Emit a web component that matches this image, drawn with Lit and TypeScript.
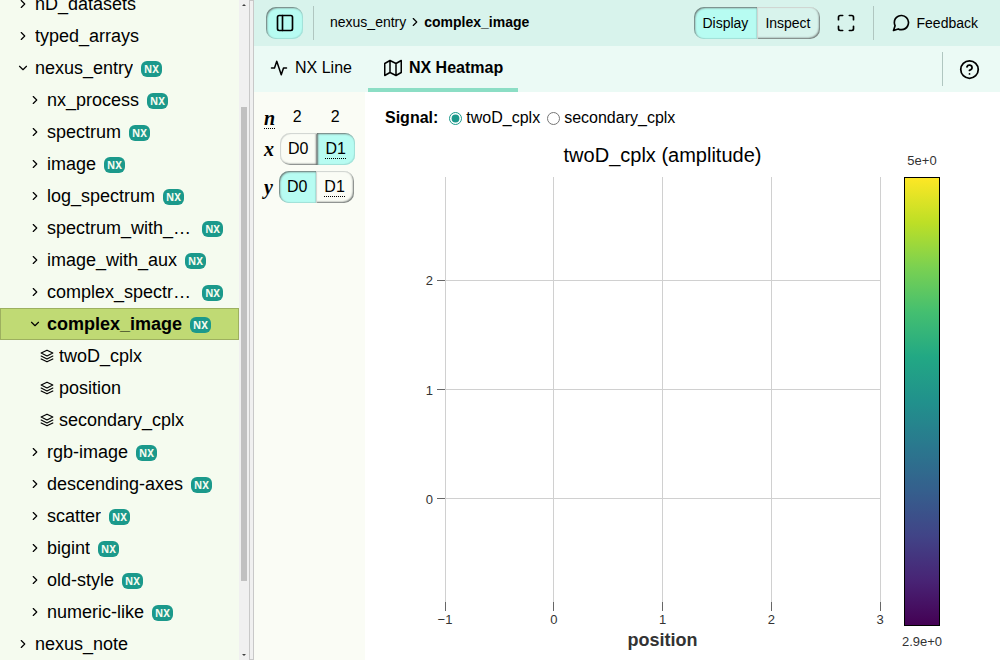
import { LitElement, html, svg, css, nothing } from "lit";
import { customElement, property, state } from "lit/decorators.js";
import { classMap } from "lit/directives/class-map.js";

const ICONS = {
  right: svg`<path d="m9 18 6-6-6-6" />`,
  down: svg`<path d="m6 9 6 6 6-6" />`,
  layers: svg`<path d="M12 2 2 7l10 5 10-5z" /><path d="m2 12 10 5 10-5" /><path d="m2 17 10 5 10-5" />`,
  sidebar: svg`<rect x="3" y="3" width="18" height="18" rx="2" /><path d="M9 3v18" />`,
  maximize: svg`<path d="M8 3H5a2 2 0 0 0-2 2v3m18 0V5a2 2 0 0 0-2-2h-3m0 18h3a2 2 0 0 0 2-2v-3M3 16v3a2 2 0 0 0 2 2h3" />`,
  message: svg`<path d="M21 11.5a8.38 8.38 0 0 1-.9 3.8 8.5 8.5 0 0 1-7.6 4.7 8.38 8.38 0 0 1-3.8-.9L3 21l1.9-5.7a8.38 8.38 0 0 1-.9-3.8 8.5 8.5 0 0 1 4.7-7.6 8.38 8.38 0 0 1 3.8-.9h.5a8.48 8.48 0 0 1 8 8v.5z" />`,
  activity: svg`<path d="M22 12h-4l-3 9L9 3l-3 9H2" />`,
  map: svg`<path d="M1 6v16l7-4 8 4 7-4V2l-7 4-8-4-7 4zM8 2v16M16 6v16" />`,
  help: svg`<circle cx="12" cy="12" r="10" /><path d="M9.09 9a3 3 0 0 1 5.83 1c0 2-3 3-3 3M12 17h.01" />`,
};

type IconName = keyof typeof ICONS;

const icon = (name: IconName, size: number) => html`<svg
  class="icon"
  width=${size}
  height=${size}
  viewBox="0 0 24 24"
  aria-hidden="true"
>
  ${ICONS[name]}
</svg>`;

const shared = css`
  :host,
  * {
    box-sizing: border-box;
  }
  button {
    font: inherit;
    color: inherit;
    background: none;
    border: 0;
    padding: 0;
    margin: 0;
    cursor: pointer;
  }
  .icon {
    display: block;
    flex: none;
    fill: none;
    stroke: currentColor;
    stroke-width: 2;
    stroke-linecap: round;
    stroke-linejoin: round;
  }
`;

interface Entity {
  name: string;
  level: number;
  kind: "group" | "open" | "dataset";
  nx?: boolean;
}

const group = (name: string, level = 1, nx = true): Entity => ({ name, level, kind: "group", nx });
const dataset = (name: string): Entity => ({ name, level: 2, kind: "dataset" });

const ENTITIES: Entity[] = [
  group("nD_datasets", 0, false),
  group("typed_arrays", 0, false),
  { name: "nexus_entry", level: 0, kind: "open", nx: true },
  group("nx_process"),
  group("spectrum"),
  group("image"),
  group("log_spectrum"),
  group("spectrum_with_aux"),
  group("image_with_aux"),
  group("complex_spectrum"),
  { name: "complex_image", level: 1, kind: "open", nx: true },
  dataset("twoD_cplx"),
  dataset("position"),
  dataset("secondary_cplx"),
  group("rgb-image"),
  group("descending-axes"),
  group("scatter"),
  group("bigint"),
  group("old-style"),
  group("numeric-like"),
  group("nexus_note", 0, false),
];

@customElement("file-explorer")
export class FileExplorer extends LitElement {
  @state() private selected = "complex_image";

  static styles = [
    shared,
    css`
      :host {
        display: grid;
        grid-template-columns: 1fr 10px;
        height: 100%;
        overflow: hidden;
        background: #f5fbef;
        font-size: 18px;
      }
      .tree {
        display: flex;
        flex-direction: column;
        justify-content: flex-end;
        min-width: 0;
        height: 100%;
        overflow: hidden;
      }
      .row {
        display: flex;
        flex: none;
        align-items: center;
        height: 32px;
        padding-right: 15px;
        border: 1px solid transparent;
        text-align: left;
      }
      .level0 {
        padding-left: 15px;
      }
      .level1 {
        padding-left: 27px;
      }
      .level2 {
        padding-left: 39px;
      }
      .selected {
        background: #c0da74;
        border-color: #9db05f;
        font-weight: bold;
      }
      .name {
        min-width: 0;
        margin-left: 5px;
        overflow: hidden;
        text-overflow: ellipsis;
        white-space: nowrap;
      }
      .badge {
        flex: none;
        margin: 1px 0 0 8px;
        padding: 0 3px;
        border-radius: 6px;
        background: #1b998b;
        color: #f5fbef;
        font: bold 10px/16px "Noto Sans", sans-serif;
      }
      .scrollbar {
        display: flex;
        flex-direction: column;
        align-items: center;
        padding: 4px 0;
        background: #f0f0f0;
      }
      .arrow {
        border: 2px solid transparent;
        border-top-width: 0;
        border-bottom-color: #404040;
      }
      .arrow.end {
        border-top: 2px solid #404040;
        border-bottom-width: 0;
      }
      .track {
        display: grid;
        grid-template-rows: 101fr 474fr 73fr;
        flex: 1;
      }
      .thumb {
        grid-row: 2;
        width: 6px;
        background: #c1c1c1;
      }
    `,
  ];

  render() {
    return html`
      <div class="tree" role="tree" aria-label="Explorer">
        ${ENTITIES.map(
          (e) => html`<button
            type="button"
            role="treeitem"
            class=${classMap({
              row: true,
              [`level${e.level}`]: true,
              selected: e.name === this.selected,
            })}
            aria-selected=${e.name === this.selected}
            @click=${() => (this.selected = e.name)}
          >
            ${icon(e.kind === "dataset" ? "layers" : e.kind === "open" ? "down" : "right", 14)}
            <span class="name">${e.name}</span>
            ${e.nx ? html`<span class="badge">NX</span>` : nothing}
          </button>`
        )}
      </div>
      <div class="scrollbar" aria-hidden="true">
        <span class="arrow"></span>
        <div class="track"><span class="thumb"></span></div>
        <span class="arrow end"></span>
      </div>
    `;
  }
}

@customElement("toggle-group")
export class ToggleGroup extends LitElement {
  @property({ attribute: false }) options: string[] = [];
  @property() value = "";
  @property() hinted = "";
  @property() label = "";

  static styles = [
    shared,
    css`
      :host {
        display: block;
      }
      .group {
        display: flex;
        height: 32px;
      }
      .option {
        padding: 0 9px 0 8px;
        box-shadow: inset 1px 1px 1px #d0d4d0, inset -1px -1px 2px #6a706e;
      }
      .option:first-child {
        border-radius: 10px 0 0 10px;
      }
      .option:last-child {
        border-radius: 0 10px 10px 0;
      }
      .pressed {
        background: #b7fcf2;
        box-shadow: inset 1px 1px 2px #6a706e, inset -1px -1px 1px #a5e6dd;
      }
      .hint {
        display: inline-block;
        border-bottom: 1px dotted #000;
        line-height: 18px;
      }
    `,
  ];

  render() {
    return html`<div class="group" role="radiogroup" aria-label=${this.label}>
      ${this.options.map(
        (o) => html`<button
          type="button"
          role="radio"
          class=${classMap({ option: true, pressed: o === this.value })}
          aria-checked=${o === this.value}
          @click=${() => (this.value = o)}
        >
          <span class=${classMap({ hint: o === this.hinted })}>${o}</span>
        </button>`
      )}
    </div>`;
  }
}

@customElement("heatmap-plot")
export class HeatmapPlot extends LitElement {
  static styles = [
    shared,
    css`
      :host {
        display: grid;
        grid-template-columns: 1fr 36px;
        column-gap: 24px;
        flex: 1;
        min-height: 0;
        padding: 0 60px 0 80px;
        color: #333;
      }
      .plot,
      .scale {
        display: flex;
        flex-direction: column;
        min-width: 0;
        min-height: 0;
      }
      .title {
        height: 37px;
        margin: 0;
        color: #000;
        font-size: 20px;
        font-weight: normal;
        line-height: 30px;
        text-align: center;
      }
      .canvas {
        flex: 1;
        min-height: 0;
        width: 100%;
        overflow: visible;
        font-size: 13px;
        fill: #333;
      }
      .grid {
        stroke: #d0d0d0;
        shape-rendering: crispEdges;
      }
      .tick {
        stroke: #666;
        shape-rendering: crispEdges;
      }
      .axis {
        height: 58px;
        padding-top: 26px;
        font-size: 18px;
        font-weight: bold;
        line-height: 24px;
        text-align: center;
      }
      .scale {
        align-items: center;
        font-size: 13px;
        white-space: nowrap;
      }
      .bound {
        height: 37px;
        padding-top: 12px;
        line-height: 18px;
      }
      .bound.low {
        height: 34px;
        padding-top: 7px;
      }
      .bar {
        flex: 1;
        width: 100%;
        border: 1px solid #000;
        background: linear-gradient(
          to top,
          #440154,
          #482475,
          #414487,
          #355f8d,
          #2a788e,
          #21918c,
          #22a884,
          #44bf70,
          #7ad151,
          #bddf26,
          #fde725
        );
      }
    `,
  ];

  render() {
    const xs = ["−1", "0", "1", "2", "3"];
    const ys = ["0", "1", "2"];
    const xAt = (i: number) => `${(i * 100) / (xs.length - 1)}%`;
    const yAt = (i: number) => `${75.65 - i * 25.65}%`;
    return html`
      <div class="plot">
        <h2 class="title">twoD_cplx (amplitude)</h2>
        <svg class="canvas" width="100%" height="100%" role="img" aria-label="Heatmap">
          ${xs.map(
            (label, i) => svg`
              <line class="grid" x1=${xAt(i)} x2=${xAt(i)} y1="0" y2="100%" />
              <svg x=${xAt(i)} y="100%" width="1" height="1" overflow="visible">
                <line class="tick" y1="0" y2="9" />
                <text x="0" y="22" text-anchor="middle">${label}</text>
              </svg>`
          )}
          ${ys.map(
            (label, i) => svg`
              <line class="grid" x1="0" x2="100%" y1=${yAt(i)} y2=${yAt(i)} />
              <svg x="0" y=${yAt(i)} width="1" height="1" overflow="visible">
                <line class="tick" x1="-8" x2="0" />
                <text x="-12" y="5" text-anchor="end">${label}</text>
              </svg>`
          )}
        </svg>
        <div class="axis">position</div>
      </div>
      <div class="scale">
        <div class="bound">5e+0</div>
        <div class="bar"></div>
        <div class="bound low">2.9e+0</div>
      </div>
    `;
  }
}

@customElement("app-root")
export class AppRoot extends LitElement {
  static styles = [
    shared,
    css`
      :host {
        display: grid;
        grid-template-columns: minmax(0, 249fr) 5px minmax(0, 746fr);
        height: 100vh;
        overflow: hidden;
        background: #fff;
        color: #000;
        font: 16px "Liberation Sans", Arial, sans-serif;
      }
      .splitter {
        border: 1px solid #c8c8c8;
        background: #f0f0f0;
      }
      .main {
        display: flex;
        flex-direction: column;
        min-height: 0;
      }
      .bar {
        display: flex;
        align-items: center;
        flex: none;
        height: 46px;
      }
      .top {
        background: #d8f3ec;
        padding: 0 22px 0 12px;
        font-size: 14px;
      }
      .toggle {
        display: grid;
        place-items: center;
        width: 37px;
        height: 32px;
        border-radius: 10px;
        background: #b7fcf2;
        box-shadow: inset 1px 1px 2px #6a706e, inset -1px -1px 1px #a5e6dd;
      }
      .divider {
        width: 1px;
        height: 34px;
        background: #b0c6c0;
      }
      .toggle + .divider {
        margin: 0 16px 0 10px;
      }
      .crumbs {
        display: flex;
        align-items: center;
        gap: 2px;
        flex: 1;
        min-width: 0;
        padding-bottom: 2px;
      }
      .full {
        margin: 0 17px 0 16px;
      }
      .feedback {
        display: flex;
        align-items: center;
        gap: 6px;
        margin-left: 17px;
        color: inherit;
        text-decoration: none;
      }
      .tabs {
        background: #ebfaf5;
        padding-right: 20px;
      }
      .tablist {
        display: flex;
        flex: 1;
        height: 100%;
      }
      .tab {
        display: flex;
        align-items: center;
        gap: 7px;
        padding: 2px 16px 0;
        border-bottom: 4px solid transparent;
      }
      .active {
        padding-right: 15px;
        border-color: #8cdec5;
        font-weight: bold;
      }
      .help {
        margin-left: 16px;
      }
      .body {
        display: grid;
        grid-template-columns: 111px minmax(0, 1fr);
        flex: 1;
        min-height: 0;
      }
      .mapper {
        display: flex;
        flex-direction: column;
        gap: 6px;
        padding: 14px 9px 14px 10px;
        background: #fafcf5;
      }
      .dim {
        display: flex;
        align-items: center;
        gap: 6px;
      }
      .sizes {
        gap: 3px;
        height: 21px;
      }
      .symbol {
        font: italic bold 20px/20px "Liberation Serif", serif;
      }
      .sizes .symbol {
        margin-top: 4px;
        border-bottom: 1px dotted #000;
      }
      .counts {
        display: flex;
      }
      .size {
        width: 38px;
        text-align: center;
      }
      .vis {
        display: flex;
        flex-direction: column;
        min-height: 0;
      }
      .signal {
        display: flex;
        align-items: center;
        height: 48px;
        margin: 0;
        padding: 4px 20px 0;
      }
      .legend {
        margin-right: 6px;
        font-weight: bold;
      }
      .choice {
        display: flex;
        align-items: center;
      }
      .radio {
        margin: 1px 4px 0 5px;
        accent-color: #1b998b;
      }
      .choice + .choice {
        margin-left: 2px;
      }
    `,
  ];

  render() {
    const dims = ["D0", "D1"];
    return html`
      <file-explorer></file-explorer>
      <div class="splitter" role="separator"></div>
      <main class="main">
        <header class="bar top">
          <button type="button" class="toggle" aria-label="Toggle sidebar">${icon("sidebar", 20)}</button>
          <span class="divider"></span>
          <div class="crumbs">
            <span>nexus_entry</span>${icon("right", 14)}<strong>complex_image</strong>
          </div>
          <toggle-group .options=${["Display", "Inspect"]} value="Display" label="View mode"></toggle-group>
          <button type="button" class="full" aria-label="Fullscreen">${icon("maximize", 20)}</button>
          <span class="divider"></span>
          <a class="feedback" href="#feedback">${icon("message", 20)}<span>Feedback</span></a>
        </header>
        <div class="bar tabs">
          <div class="tablist" role="tablist">
            <button type="button" class="tab" role="tab" aria-selected="false">
              ${icon("activity", 18)}<span>NX Line</span>
            </button>
            <button type="button" class="tab active" role="tab" aria-selected="true">
              ${icon("map", 18)}<span>NX Heatmap</span>
            </button>
          </div>
          <span class="divider"></span>
          <button type="button" class="help" aria-label="Help">${icon("help", 21)}</button>
        </div>
        <div class="body">
          <div class="mapper">
            <div class="dim sizes">
              <span class="symbol">n</span>
              <div class="counts"><span class="size">2</span><span class="size">2</span></div>
            </div>
            <div class="dim">
              <span class="symbol">x</span>
              <toggle-group .options=${dims} value="D1" hinted="D1" label="x axis"></toggle-group>
            </div>
            <div class="dim">
              <span class="symbol">y</span>
              <toggle-group .options=${dims} value="D0" hinted="D1" label="y axis"></toggle-group>
            </div>
          </div>
          <section class="vis">
            <div class="signal" role="radiogroup" aria-labelledby="signal">
              <span class="legend" id="signal">Signal:</span>
              <label class="choice"><input class="radio" type="radio" name="signal" checked />twoD_cplx</label>
              <label class="choice"><input class="radio" type="radio" name="signal" />secondary_cplx</label>
            </div>
            <heatmap-plot></heatmap-plot>
          </section>
        </div>
      </main>
    `;
  }
}
